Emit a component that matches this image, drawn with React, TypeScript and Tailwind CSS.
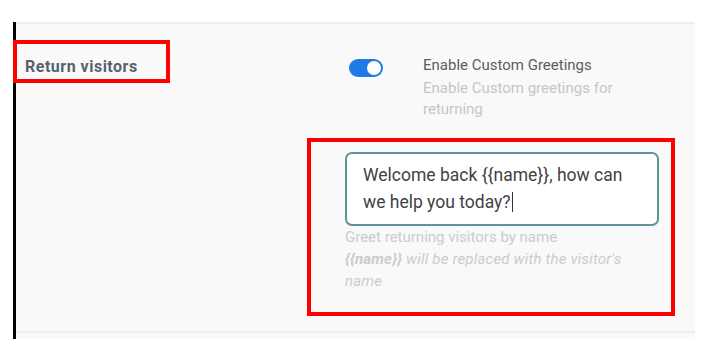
export default function App(): JSX.Element {
  return (
    <div className="min-h-screen bg-white font-['Roboto',sans-serif]">
      <div className="pl-[13px] pt-[22px]">
        <div className="w-[682px] border-l-[3px] border-black bg-[#f9f9f9] pb-[6px]">
          <div className="flex h-[311px] border-t-2 border-b-2 border-[#ededed]">
            <div className="w-[329px] shrink-0">
              <div className="relative z-10 -ml-[3px] mt-[16px] h-[43px] w-[157px] border-4 border-[#ff0000] pl-[8px] pt-[13px]">
                <span className="block text-[16px] font-bold leading-5 tracking-[0.5px] text-[#58626d]">
                  Return visitors
                </span>
              </div>
            </div>
            <div className="flex flex-col">
              <div className="mt-[31px] flex items-start">
                <div className="ml-[4px] mt-[4px] flex h-[18px] w-[34px] items-center justify-end rounded-full bg-[#1f7ae8] pr-[2px]">
                  <div className="h-[14px] w-[14px] rounded-full bg-white" />
                </div>
                <div className="ml-[40px] w-[205px]">
                  <div className="text-[15px] leading-5 text-[#5b5e62]">
                    Enable Custom Greetings
                  </div>
                  <div className="mt-[3px] text-[15px] leading-[21px] text-[#c3c6c9]">
                    Enable Custom greetings for returning
                  </div>
                </div>
              </div>
              <div className="-ml-[38px] mt-[18px] h-[178px] w-[368px] border-4 border-[#ff0000] pl-[34px] pt-[10px]">
                <div className="h-[74px] w-[314px] rounded-[7px] border-2 border-[#5e9496] bg-white px-[16px] pt-[9px]">
                  <p className="text-[17.5px] leading-[25px] text-[#3f4246]">
                    Welcome back {"{{name}}"}, how can we help you today?
                    <span className="ml-px inline-block h-[20px] w-px translate-y-[4px] bg-[#333]" />
                  </p>
                </div>
                <div className="w-[300px] text-[15px] leading-[22px] text-[#c9ccd0]">
                  <div>Greet returning visitors by name</div>
                  <div className="italic tracking-[0.2px]">
                    <span className="font-bold">{"{{name}}"}</span> will be replaced
                    with the visitor's name
                  </div>
                </div>
              </div>
            </div>
          </div>
        </div>
      </div>
    </div>
  );
}
